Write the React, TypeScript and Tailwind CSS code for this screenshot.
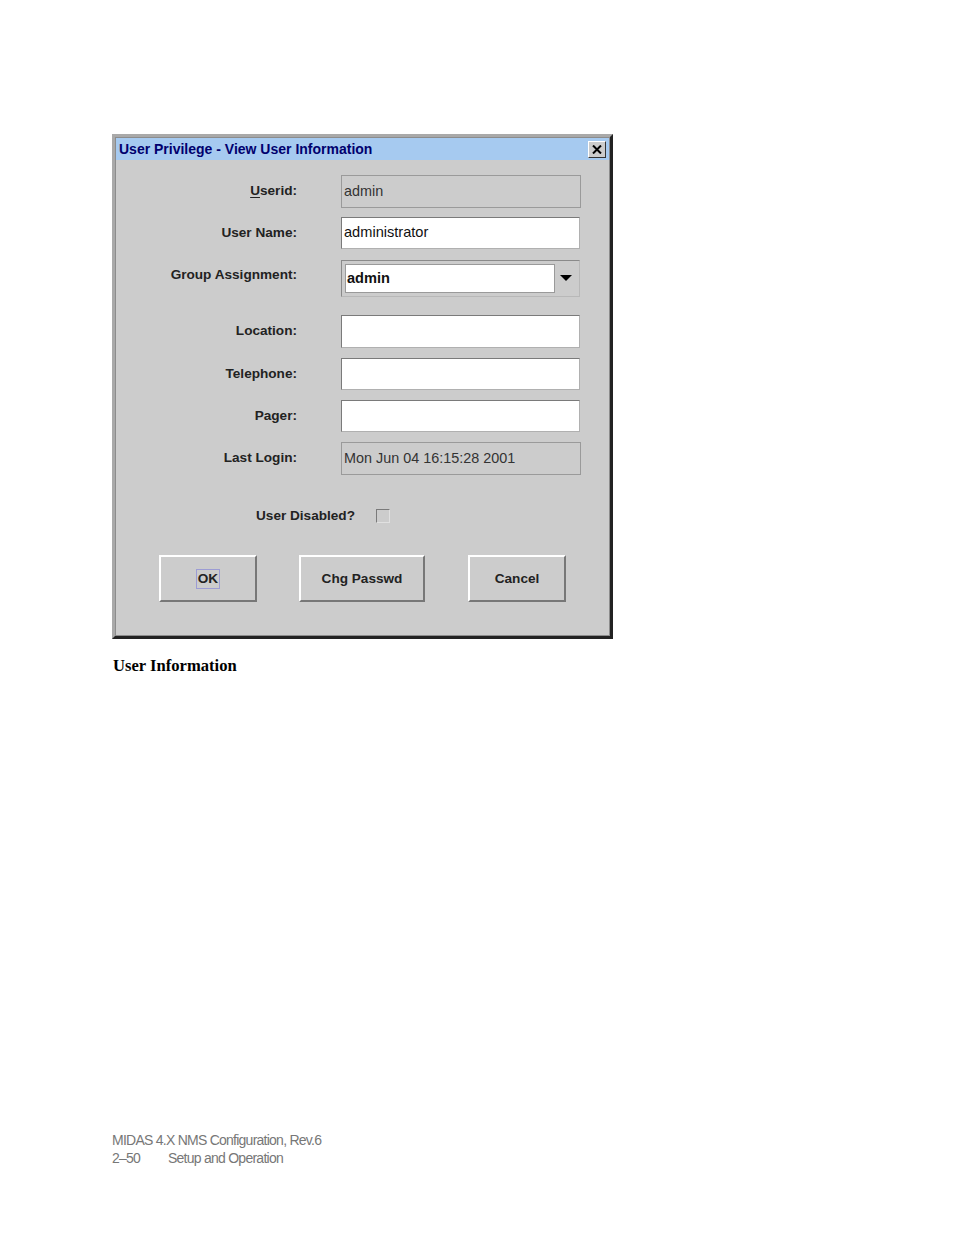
import React from 'react';

const UI = { fontFamily: '"Liberation Sans", Arial, sans-serif' };

function Label({ children }: { children: React.ReactNode }) {
  return (
    <div className="flex h-full items-center justify-end text-[13.6px] font-bold text-[#222]" style={UI}>
      {children}
    </div>
  );
}

function Field({ value, readOnly }: { value?: string; readOnly?: boolean }) {
  return (
    <div
      className={
        readOnly
          ? 'flex h-full items-center border border-[#9a9a9a] bg-[#cccccc] px-[2px] text-[14.4px] text-[#333]'
          : 'flex h-full items-center border border-[#7a7a7a] border-r-[#b0b0b0] border-b-[#b0b0b0] bg-white px-[2px] text-[14.6px] text-[#111]'
      }
      style={UI}
    >
      {value}
    </div>
  );
}

function Button({ label, focus, w }: { label: string; focus?: boolean; w: string }) {
  return (
    <div
      className={`flex h-[47px] ${w} items-center justify-center border-2 border-t-white border-l-white border-r-[#777] border-b-[#777] bg-[#cccccc] text-[13.6px] font-bold text-[#222]`}
      style={UI}
    >
      <span className={focus ? 'border border-[#9c9cd4] px-[1px] leading-[18px]' : ''}>{label}</span>
    </div>
  );
}

export default function App() {
  return (
    <div className="min-h-[1235px] w-[954px] bg-white">
      <div className="pl-[112px] pt-[134px]">
        {/* Dialog window */}
        <div className="w-[501px] border-[3px] border-t-[#a9a9a9] border-l-[#a9a9a9] border-r-[#222] border-b-[#222] bg-[#cccccc]">
          <div className="border border-[#8c8c8c]">
            {/* Title bar */}
            <div className="flex h-[22px] items-center justify-between bg-[#a6caf0] pl-[3px] pr-[3px]">
              <span className="text-[14px] font-bold text-[#00006e]" style={UI}>
                User Privilege - View User Information
              </span>
              <div className="flex h-[17px] w-[18px] items-center justify-center border border-t-white border-l-white border-r-[#333] border-b-[#333] bg-[#cccccc]">
                <svg width="10" height="9" viewBox="0 0 10 9">
                  <path d="M1 0.5 L9 8.5 M9 0.5 L1 8.5" stroke="#000" strokeWidth="2" />
                </svg>
              </div>
            </div>

            {/* Form */}
            <div className="grid grid-cols-[181px_240px] gap-x-[44px] pt-[15px]">
              <div className="h-[33px]">
                <Label>
                  <span>
                    <span className="underline underline-offset-2">U</span>serid:
                  </span>
                </Label>
              </div>
              <div className="h-[33px]">
                <Field value="admin" readOnly />
              </div>

              <div className="mt-[9px] h-[32px]">
                <Label>User Name:</Label>
              </div>
              <div className="mt-[9px] h-[32px] w-[239px]">
                <Field value="administrator" />
              </div>

              <div className="mt-[11px] h-[30px]">
                <Label>Group Assignment:</Label>
              </div>
              <div className="mt-[11px] h-[37px] w-[239px]">
                <div className="flex h-full border border-[#8a8a8a] border-r-[#b8b8b8] border-b-[#b8b8b8] bg-[#cccccc] p-[3px]">
                  <div
                    className="flex flex-1 items-center border border-[#9a9a9a] bg-white pl-[1px] text-[14.6px] font-bold text-[#111]"
                    style={UI}
                  >
                    admin
                  </div>
                  <div className="flex w-[21px] items-center justify-center">
                    <svg width="12" height="7" viewBox="0 0 12 7">
                      <path d="M0 0 L12 0 L6 6 Z" fill="#000" />
                    </svg>
                  </div>
                </div>
              </div>

              <div className="mt-[18px] h-[33px]">
                <Label>Location:</Label>
              </div>
              <div className="mt-[18px] h-[33px] w-[239px]">
                <Field />
              </div>

              <div className="mt-[10px] h-[32px]">
                <Label>Telephone:</Label>
              </div>
              <div className="mt-[10px] h-[32px] w-[239px]">
                <Field />
              </div>

              <div className="mt-[10px] h-[32px]">
                <Label>Pager:</Label>
              </div>
              <div className="mt-[10px] h-[32px] w-[239px]">
                <Field />
              </div>

              <div className="mt-[10px] h-[33px]">
                <Label>Last Login:</Label>
              </div>
              <div className="mt-[10px] h-[33px]">
                <Field value="Mon Jun 04 16:15:28 2001" readOnly />
              </div>
            </div>

            {/* Checkbox row */}
            <div className="mt-[31px] flex items-center pl-[140px]">
              <span className="text-[13.6px] font-bold text-[#222]" style={UI}>
                User Disabled?
              </span>
              <div className="ml-[21px] h-[14px] w-[14px] border border-[#7a7a7a] border-r-[#e0e0e0] border-b-[#e0e0e0] bg-[#cccccc]" />
            </div>

            {/* Buttons */}
            <div className="mt-[29px] flex pb-[33px] pl-[43px]">
              <Button label="OK" focus w="w-[98px]" />
              <div className="ml-[42px]">
                <Button label="Chg Passwd" w="w-[126px]" />
              </div>
              <div className="ml-[43px]">
                <Button label="Cancel" w="w-[98px]" />
              </div>
            </div>
          </div>
        </div>

        {/* Caption */}
        <div
          className="mt-[15px] pl-[1px] text-[16.6px] font-bold text-black"
          style={{ fontFamily: '"Liberation Serif", "Times New Roman", serif' }}
        >
          User Information
        </div>
      </div>

      {/* Footer */}
      <div
        className="mt-[452px] pl-[112px] text-[14px] leading-[18px] tracking-[-0.75px] text-[#777]"
        style={UI}
      >
        <div>MIDAS 4.X NMS Configuration, Rev.6</div>
        <div className="flex">
          <span className="w-[56px]">2–50</span>
          <span>Setup and Operation</span>
        </div>
      </div>
    </div>
  );
}
